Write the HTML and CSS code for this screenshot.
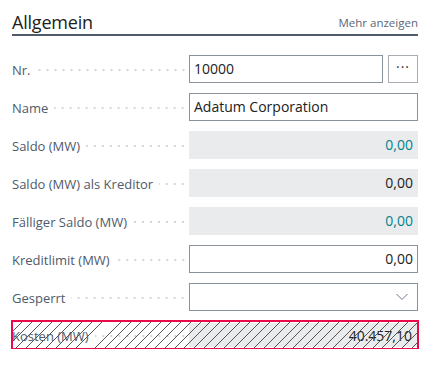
FILE: index.html
```html
<!DOCTYPE html>
<html lang="de">

<head>
    <meta charset="UTF-8">
    <meta name="viewport" content="width=device-width, initial-scale=1.0">
    <title>Allgemein</title>
    <link rel="stylesheet" href="styles.css">
</head>

<body>
    <div class="card">
        <div class="card-head">
            <h2>Allgemein</h2>
            <a class="more">Mehr anzeigen</a>
        </div>
        <div class="fields">
            <div class="row">
                <div class="label"><span>Nr.</span><i class="dots"></i></div>
                <div class="field-group">
                    <div class="field edit">10000</div>
                    <div class="btn-more">&middot;&middot;&middot;</div>
                </div>
            </div>
            <div class="row">
                <div class="label"><span>Name</span><i class="dots"></i></div>
                <div class="field edit">Adatum Corporation</div>
            </div>
            <div class="row">
                <div class="label"><span>Saldo (MW)</span><i class="dots"></i></div>
                <div class="field readonly num link">0,00</div>
            </div>
            <div class="row">
                <div class="label"><span>Saldo (MW) als Kreditor</span><i class="dots"></i></div>
                <div class="field readonly num">0,00</div>
            </div>
            <div class="row">
                <div class="label"><span>Fälliger Saldo (MW)</span><i class="dots"></i></div>
                <div class="field readonly num link">0,00</div>
            </div>
            <div class="row">
                <div class="label"><span>Kreditlimit (MW)</span><i class="dots"></i></div>
                <div class="field edit num">0,00</div>
            </div>
            <div class="row">
                <div class="label"><span>Gesperrt</span><i class="dots"></i></div>
                <div class="field edit select">
                    <svg width="12" height="8" viewBox="0 0 12 8"><path d="M0.5 1 L6 6.5 L11.5 1" fill="none" stroke="#6b7a8c" stroke-width="1"/></svg>
                </div>
            </div>
            <div class="row selected">
                <div class="label"><span>Kosten (MW)</span><i class="dots"></i></div>
                <div class="field readonly num">40.457,10</div>
                <div class="hatch"></div>
            </div>
        </div>
    </div>
</body>

</html>
```

FILE: styles.css
```css
* {
    padding: 0;
    margin: 0;
    box-sizing: border-box;
}

body {
    font-family: "Open Sans", "Noto Sans", Arial, sans-serif;
    background: #fff;
    color: #212121;
}

.card {
    padding: 8px 12px 0 12px;
}

.card-head {
    display: flex;
    justify-content: space-between;
    align-items: flex-end;
    height: 28px;
    border-bottom: 2px solid #505a6b;
}

.card-head h2 {
    font-weight: 400;
    font-size: 18px;
    line-height: 24px;
    color: #212121;
    letter-spacing: -0.2px;
}

.more {
    font-size: 11.5px;
    color: #5c6778;
    line-height: 20px;
    padding-bottom: 1px;
}

.fields {
    display: flex;
    flex-direction: column;
    gap: 10px;
    padding-top: 19px;
}

.row {
    position: relative;
    display: flex;
    align-items: center;
    height: 28px;
}

.label {
    width: 177px;
    display: flex;
    align-items: center;
    font-size: 13px;
    color: #4f5a6b;
    padding-top: 1px;
}

.label span {
    white-space: nowrap;
    margin-right: 6px;
}

.dots {
    flex: 1;
    height: 4px;
    margin-right: 2px;
    background-image: radial-gradient(circle, #d3d6da 0.9px, transparent 1.1px);
    background-size: 8px 4px;
    background-position: right center;
    background-repeat: repeat-x;
}

.field-group {
    flex: 1;
    display: flex;
    gap: 5px;
}

.field {
    flex: 1;
    height: 28px;
    font-size: 14px;
    line-height: 26px;
    padding: 0 4px;
    color: #212121;
    white-space: nowrap;
}

.edit {
    border: 1px solid #8a929c;
}

.readonly {
    background: #eaebec;
    border: 1px solid #eaebec;
}

.num {
    text-align: right;
}

.link {
    color: #00838f;
}

.btn-more {
    width: 30px;
    height: 28px;
    border: 1px solid #a8adb3;
    text-align: center;
    font-size: 14px;
    line-height: 22px;
    letter-spacing: 1px;
    color: #333;
}

.select {
    display: flex;
    justify-content: flex-end;
    align-items: center;
    padding-right: 9px;
}

.selected {
    outline: 2px solid #ea0a4c;
    outline-offset: -1px;
    height: 28px;
}

.selected .field {
    height: 24px;
    line-height: 24px;
    margin-right: 1px;
}

.hatch {
    position: absolute;
    left: 1px;
    right: 1px;
    top: 1px;
    bottom: 1px;
    background-image: repeating-linear-gradient(135deg, transparent 0 6.3px, #555 6.3px 7px);
    pointer-events: none;
}
```
